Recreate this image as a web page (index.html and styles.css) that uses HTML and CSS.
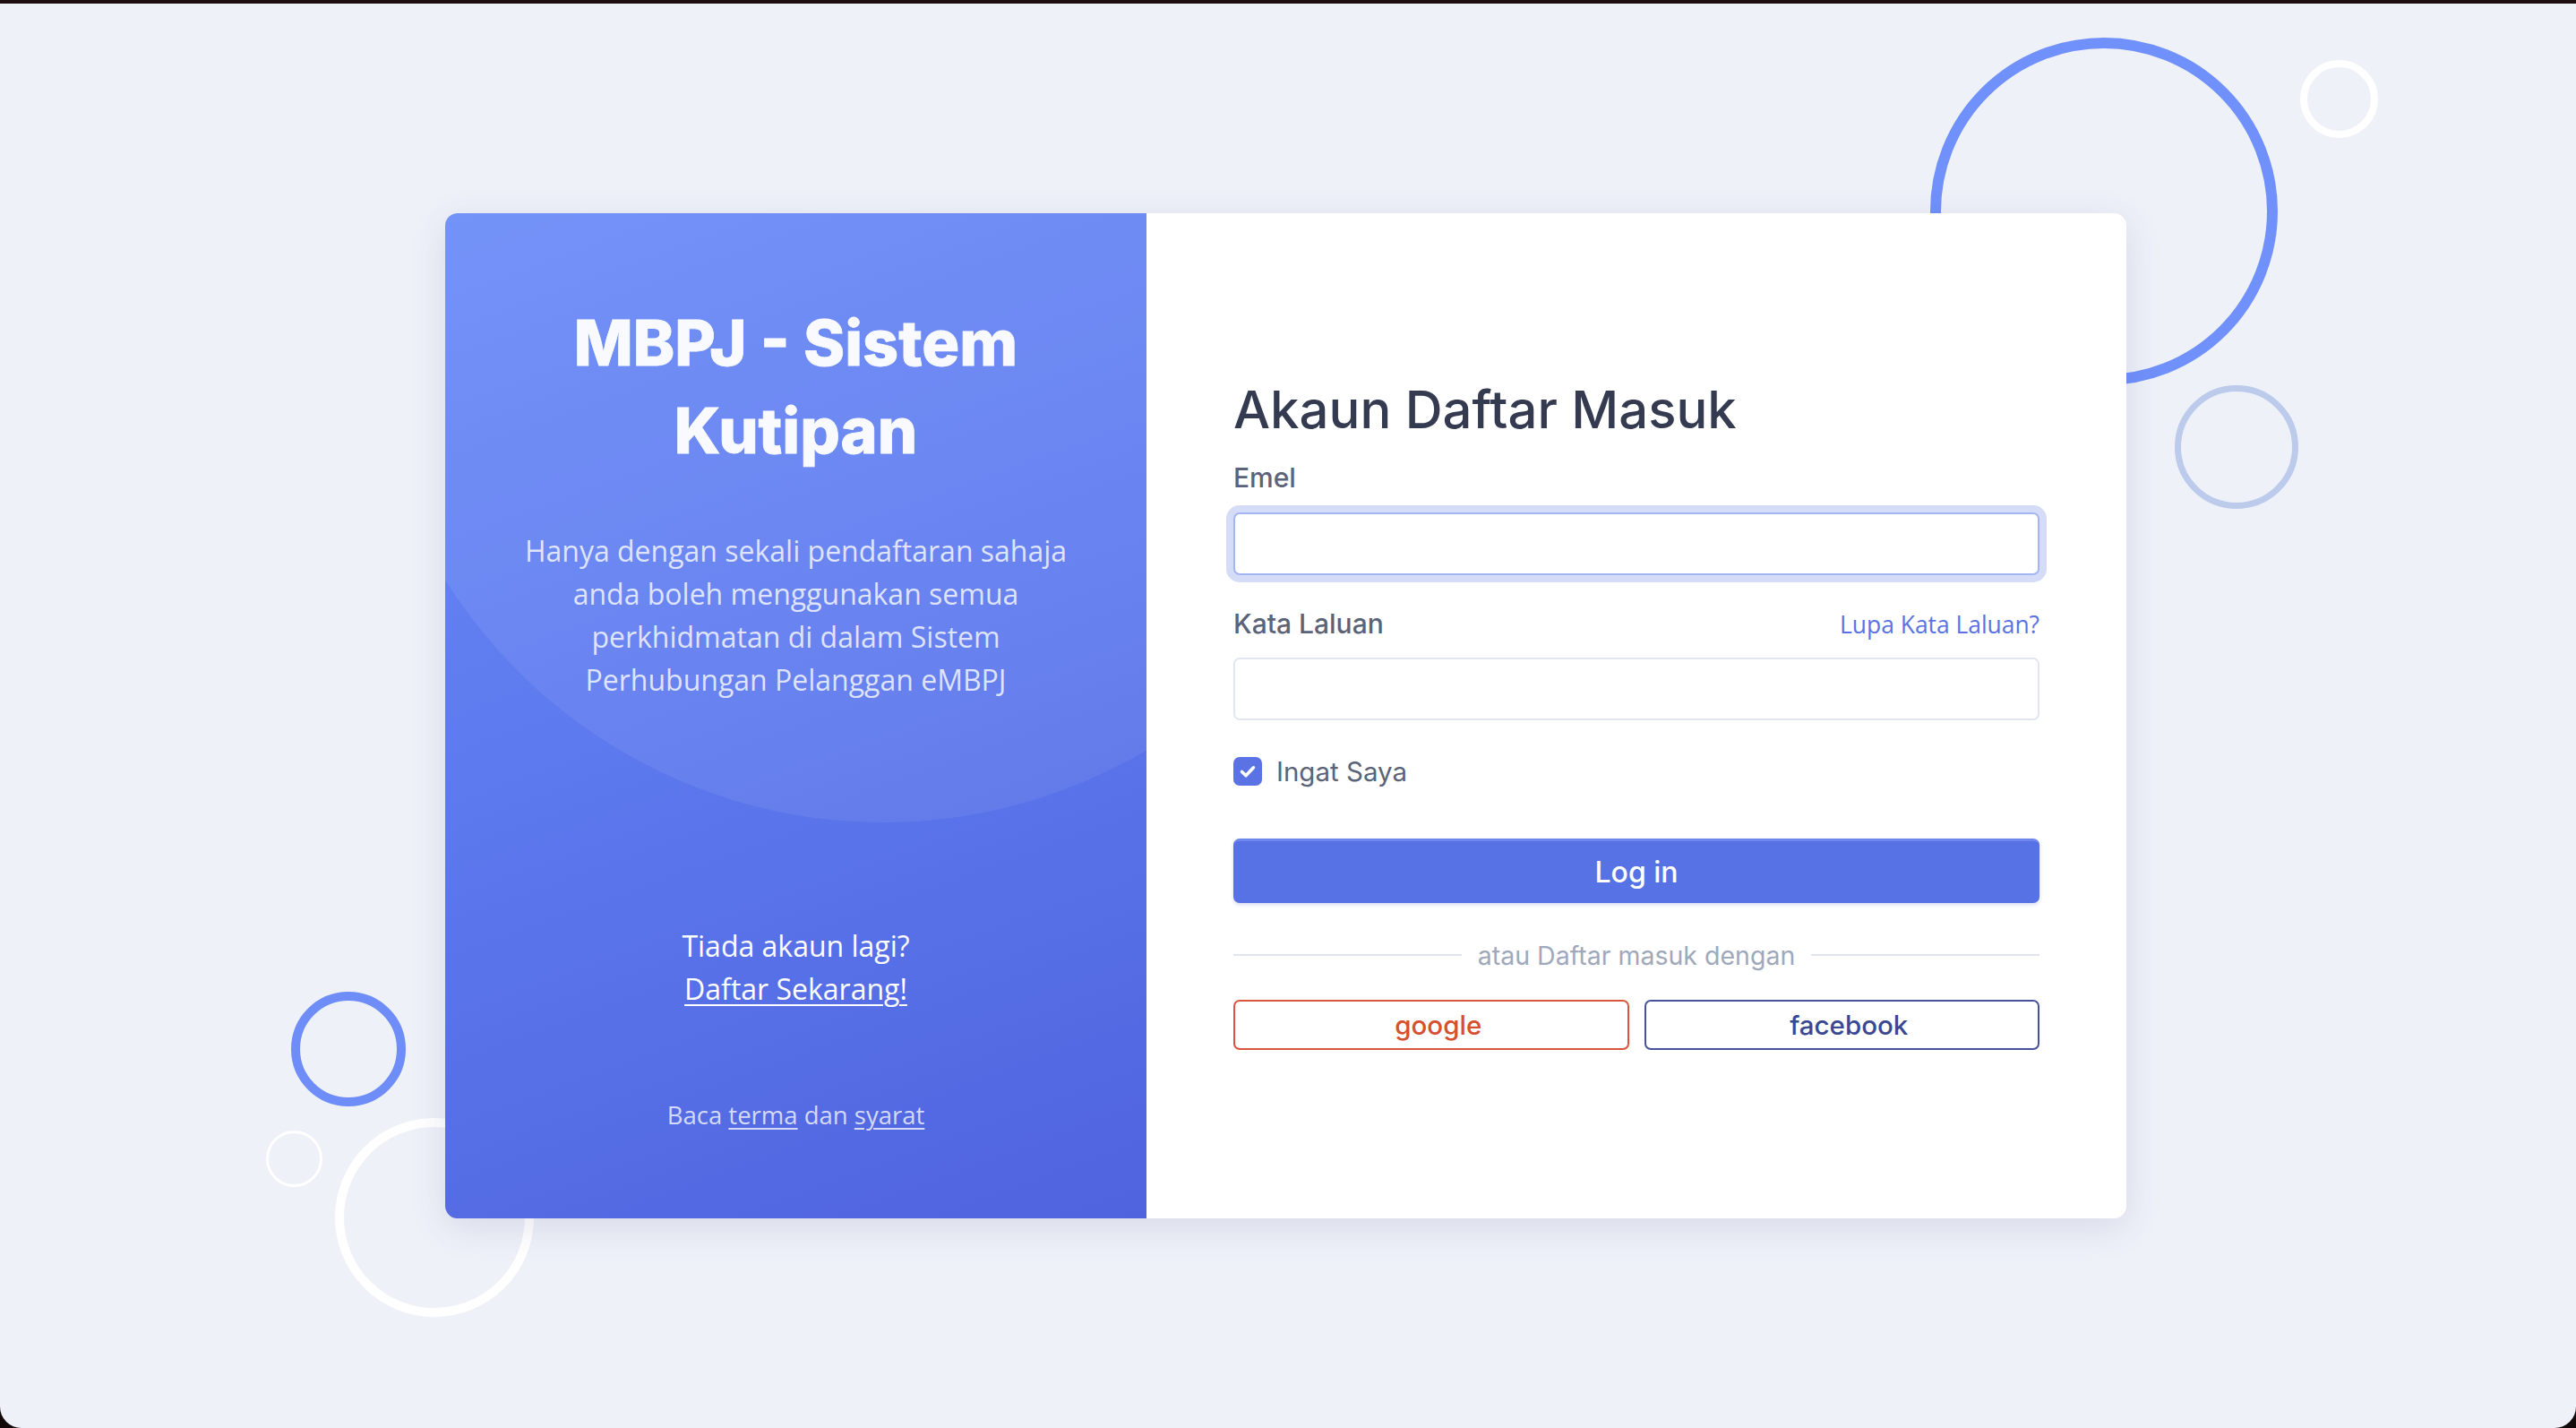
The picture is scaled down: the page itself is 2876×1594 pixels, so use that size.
FILE: index.html
```html
<!DOCTYPE html>
<html lang="ms">
<head>
<meta charset="utf-8">
<title>MBPJ - Sistem Kutipan</title>
<link rel="stylesheet" href="styles.css">
</head>
<body>
<div class="topbar"></div>
<main class="stage">
  <span class="ring ring-big-blue"></span>
  <span class="ring ring-small-white"></span>
  <span class="ring ring-soft-blue"></span>
  <span class="ring ring-blue-left"></span>
  <span class="ring ring-tiny-white"></span>
  <span class="ring ring-big-white"></span>

  <div class="card">
    <section class="promo">
      <span class="promo-blob"></span>
      <h1 class="promo-title">MBPJ - Sistem<br>Kutipan</h1>
      <p class="promo-text">Hanya dengan sekali pendaftaran sahaja<br>anda boleh menggunakan semua<br>perkhidmatan di dalam Sistem<br>Perhubungan Pelanggan eMBPJ</p>
      <div class="promo-signup">
        <p>Tiada akaun lagi?</p>
        <a href="#">Daftar Sekarang!</a>
      </div>
      <p class="promo-terms">Baca <a href="#">terma</a> dan <a href="#">syarat</a></p>
    </section>

    <section class="login">
      <form class="login-form">
        <h2 class="login-title">Akaun Daftar Masuk</h2>
        <label class="field-label">Emel</label>
        <input class="field-input is-focus" type="email">
        <div class="label-row">
          <label class="field-label">Kata Laluan</label>
          <a class="forgot" href="#">Lupa Kata Laluan?</a>
        </div>
        <input class="field-input" type="password">
        <label class="remember">
          <span class="checkbox"><svg viewBox="0 0 32 32" width="32" height="32"><path d="M9.5 16.5l4.5 4.3 8.5-9" fill="none" stroke="#fff" stroke-width="3.6" stroke-linecap="round" stroke-linejoin="round"/></svg></span>
          <span class="remember-text">Ingat Saya</span>
        </label>
        <button class="btn-login" type="button">Log in</button>
        <div class="divider"><span>atau Daftar masuk dengan</span></div>
        <div class="social">
          <button class="btn-social google" type="button">google</button>
          <button class="btn-social facebook" type="button">facebook</button>
        </div>
      </form>
    </section>
  </div>
</main>
</body>
</html>
```
FILE: styles.css
```css
* { box-sizing: border-box; }
html, body { margin: 0; padding: 0; background: #120a0a; }
body { width: 2876px; height: 1594px; overflow: hidden; font-family: "Open Sans", sans-serif; }

.topbar { height: 4px; background: #1d0f0f; }

.stage {
  position: relative;
  height: 1590px;
  background: #eef1f8;
  border-radius: 0 0 24px 24px;
  overflow: hidden;
  display: flex;
  align-items: center;
  justify-content: center;
}

.ring { position: absolute; border-radius: 50%; border-style: solid; }
.ring-big-blue { left: 2155px; top: 38px; width: 388px; height: 388px; border-width: 12px; border-color: #7090fb; }
.ring-small-white { left: 2568px; top: 63px; width: 87px; height: 87px; border-width: 8px; border-color: #ffffff; }
.ring-soft-blue { left: 2428px; top: 426px; width: 138px; height: 138px; border-width: 7px; border-color: #bccaec; }
.ring-blue-left { left: 325px; top: 1103px; width: 128px; height: 128px; border-width: 10px; border-color: #6e8df9; }
.ring-tiny-white { left: 297px; top: 1258px; width: 63px; height: 63px; border-width: 3px; border-color: #ffffff; }
.ring-big-white { left: 374px; top: 1244px; width: 222px; height: 222px; border-width: 10px; border-color: #ffffff; }

.card {
  position: relative;
  z-index: 1;
  display: grid;
  grid-template-columns: 783px 1094px;
  height: 1122px;
  margin-right: 5px;
  border-radius: 14px;
  overflow: hidden;
  background: #fff;
  box-shadow: 0 10px 40px rgba(60, 72, 120, 0.13);
}

/* left promo panel */
.promo {
  position: relative;
  overflow: hidden;
  display: flex;
  flex-direction: column;
  align-items: center;
  text-align: center;
  padding-top: 96px;
  color: #fff;
  background: linear-gradient(160deg, #6a8bf9 0%, #5c78ed 50%, #4f63de 100%);
}
.promo-blob {
  position: absolute;
  left: -88px;
  top: -474px;
  width: 1154px;
  height: 1154px;
  border-radius: 50%;
  background: rgba(255, 255, 255, 0.07);
}
.promo > *:not(.promo-blob) { position: relative; }
.promo-title {
  margin: 0;
  font-family: "Inter", sans-serif;
  font-weight: 800;
  font-size: 70px;
  line-height: 98px;
  color: #f9faff;
  -webkit-text-stroke: 0.8px #f9faff;
}
.promo-text {
  margin: 61px 0 0;
  font-size: 32px;
  line-height: 48px;
  color: rgba(255, 255, 255, 0.78);
}
.promo-signup { margin-top: 249px; font-size: 32px; line-height: 48px; }
.promo-signup p { margin: 0; }
.promo-signup a { color: #fff; text-decoration: underline; text-underline-offset: 5px; text-decoration-thickness: 2px; }
.promo-terms { margin: 97px 0 0; font-size: 27.5px; line-height: 40px; color: rgba(255, 255, 255, 0.75); }
.promo-terms a { color: inherit; text-decoration: underline; text-underline-offset: 4px; text-decoration-thickness: 2px; }

/* right login panel */
.login { padding: 185px 97px 0; }
.login-form { display: flex; flex-direction: column; }
.login-title {
  margin: 0;
  font-family: "Inter", sans-serif;
  font-weight: 500;
  font-size: 58px;
  line-height: 68px;
  color: #343b50;
}
.field-label {
  font-family: "Inter", sans-serif;
  font-weight: 500;
  font-size: 30px;
  line-height: 40px;
  color: #5b6378;
}
.login-title + .field-label { margin-top: 22px; }
.field-input {
  margin-top: 19px;
  height: 70px;
  width: 100%;
  border: 2px solid #e2e6f0;
  border-radius: 7px;
  background: #fff;
  outline: none;
}
.field-input.is-focus { border-color: #a3b6f2; box-shadow: 0 0 0 8px #d4dcf7; }
.label-row { margin-top: 34px; display: flex; justify-content: space-between; align-items: baseline; }
.label-row + .field-input { margin-top: 18px; }
.forgot { font-size: 26.4px; color: #5a72e2; text-decoration: none; }

.remember { margin-top: 41px; display: flex; align-items: center; gap: 16px; height: 32px; }
.checkbox { width: 32px; height: 32px; border-radius: 7px; background: #5a72e3; display: block; }
.checkbox svg { display: block; }
.remember-text { font-family: "Inter", sans-serif; font-size: 29.5px; color: #5b6378; }

.btn-login {
  margin-top: 59px;
  height: 72px;
  border: none;
  border-top: 3px solid #7088ee;
  border-radius: 7px;
  background: #5672e4;
  color: #fff;
  font-family: "Inter", sans-serif;
  font-weight: 500;
  font-size: 32px;
  box-shadow: 0 2px 4px rgba(60, 80, 180, 0.2);
}

.divider { margin-top: 38px; height: 40px; display: flex; align-items: center; gap: 18px; }
.divider::before, .divider::after { content: ""; flex: 1; height: 2px; background: #dfe4ef; }
.divider span { font-family: "Inter", sans-serif; font-size: 28.5px; color: #a0a8bb; }

.social { margin-top: 30px; display: grid; grid-template-columns: 1fr 1fr; gap: 17px; }
.btn-social {
  height: 56px;
  padding: 0 0 0 16px;
  border-radius: 7px;
  background: #fff;
  font-family: "Inter", sans-serif;
  font-weight: 500;
  font-size: 29.5px;
}
.google { border: 2px solid #d9553b; color: #d4502f; }
.facebook { border: 2px solid #46539c; color: #3a4892; }
```
